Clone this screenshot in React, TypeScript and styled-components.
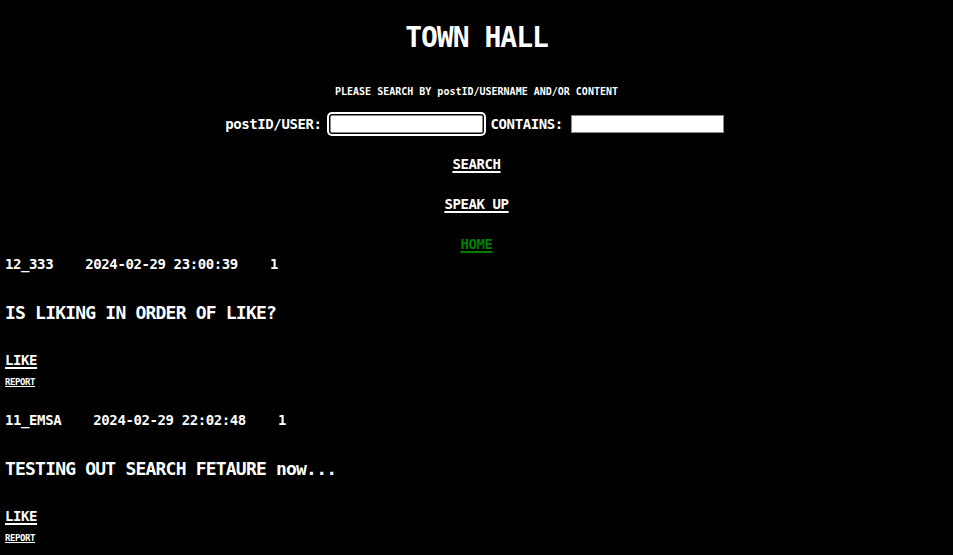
import React from "react";
import styled, { createGlobalStyle } from "styled-components";

const GlobalStyle = createGlobalStyle`
  html, body {
    margin: 0;
    padding: 0;
    background: #000;
  }
  body {
    font-family: "DejaVu Sans Mono", "Liberation Mono", monospace;
    font-weight: bold;
    color: #fff;
  }
`;

const Page = styled.div`
  display: flex;
  flex-direction: column;
  min-height: 555px;
  background: #000;
`;

const Header = styled.header`
  display: flex;
  flex-direction: column;
  align-items: center;
`;

const Title = styled.h1`
  margin: 22px 0 0;
  font-size: 28px;
  line-height: 32px;
  letter-spacing: -1px;
  font-weight: bold;
  color: #fff;
`;

const Hint = styled.p`
  margin: 32px 0 0;
  font-size: 10px;
  line-height: 12px;
`;

const SearchForm = styled.form`
  margin: 15px 0 0;
  display: flex;
  align-items: center;
  gap: 8px;
  height: 21px;
  padding-right: 4px;
`;

const Label = styled.label`
  font-size: 14px;
  line-height: 16px;
  letter-spacing: -0.4px;
`;

const Field = styled.input<{ $focused?: boolean }>`
  box-sizing: border-box;
  width: 153px;
  height: 18px;
  margin: 0;
  padding: 0 2px;
  background: #fff;
  border: 1px solid #8a8a8a;
  border-radius: ${(p) => (p.$focused ? "2px" : "0")};
  box-shadow: ${(p) => (p.$focused ? "0 0 0 1px #000, 0 0 0 3px #fff" : "none")};
  outline: none;
  font: inherit;
  font-size: 13px;
`;

const NavLink = styled.a<{ $top: number; $green?: boolean }>`
  margin-top: ${(p) => p.$top}px;
  font-size: 14px;
  line-height: 16px;
  letter-spacing: -0.4px;
  color: ${(p) => (p.$green ? "#008000" : "#fff")};
  text-decoration: underline;
  text-decoration-thickness: 2px;
  text-underline-offset: 2px;
  cursor: pointer;
`;

const Feed = styled.main`
  display: flex;
  flex-direction: column;
  padding: 4px 0 0 5px;
`;

const Post = styled.article`
  display: flex;
  flex-direction: column;
  align-items: flex-start;
  padding-bottom: 24px;
`;

const Meta = styled.div`
  font-size: 14px;
  line-height: 16px;
  letter-spacing: -0.4px;
  white-space: pre;
`;

const Body = styled.p`
  margin: 30px 0 0;
  font-size: 18px;
  line-height: 22px;
  letter-spacing: -0.8px;
`;

const LikeLink = styled.a`
  margin-top: 28px;
  font-size: 14px;
  line-height: 16px;
  letter-spacing: -0.4px;
  color: #fff;
  text-decoration: underline;
  text-decoration-thickness: 2px;
  text-underline-offset: 2px;
  cursor: pointer;
`;

const ReportLink = styled.a`
  margin-top: 9px;
  font-size: 9px;
  line-height: 11px;
  letter-spacing: -0.4px;
  color: #fff;
  text-decoration: underline;
  text-decoration-thickness: 1px;
  text-underline-offset: 1px;
  cursor: pointer;
`;

const posts = [
  { user: "12_333", date: "2024-02-29 23:00:39", likes: 1, text: "IS LIKING IN ORDER OF LIKE?" },
  { user: "11_EMSA", date: "2024-02-29 22:02:48", likes: 1, text: "TESTING OUT SEARCH FETAURE now..." },
];

export default function App() {
  return (
    <Page>
      <GlobalStyle />
      <Header>
        <Title>TOWN HALL</Title>
        <Hint>PLEASE SEARCH BY postID/USERNAME AND/OR CONTENT</Hint>
        <SearchForm onSubmit={(e) => e.preventDefault()}>
          <Label htmlFor="user">postID/USER:</Label>
          <Field id="user" $focused />
          <Label htmlFor="contains">CONTAINS:</Label>
          <Field id="contains" />
        </SearchForm>
        <NavLink $top={22}>SEARCH</NavLink>
        <NavLink $top={24}>SPEAK UP</NavLink>
        <NavLink $top={24} $green>HOME</NavLink>
      </Header>
      <Feed>
        {posts.map((p) => (
          <Post key={p.user}>
            <Meta>{`${p.user}    ${p.date}    ${p.likes}`}</Meta>
            <Body>{p.text}</Body>
            <LikeLink>LIKE</LikeLink>
            <ReportLink>REPORT</ReportLink>
          </Post>
        ))}
      </Feed>
    </Page>
  );
}
